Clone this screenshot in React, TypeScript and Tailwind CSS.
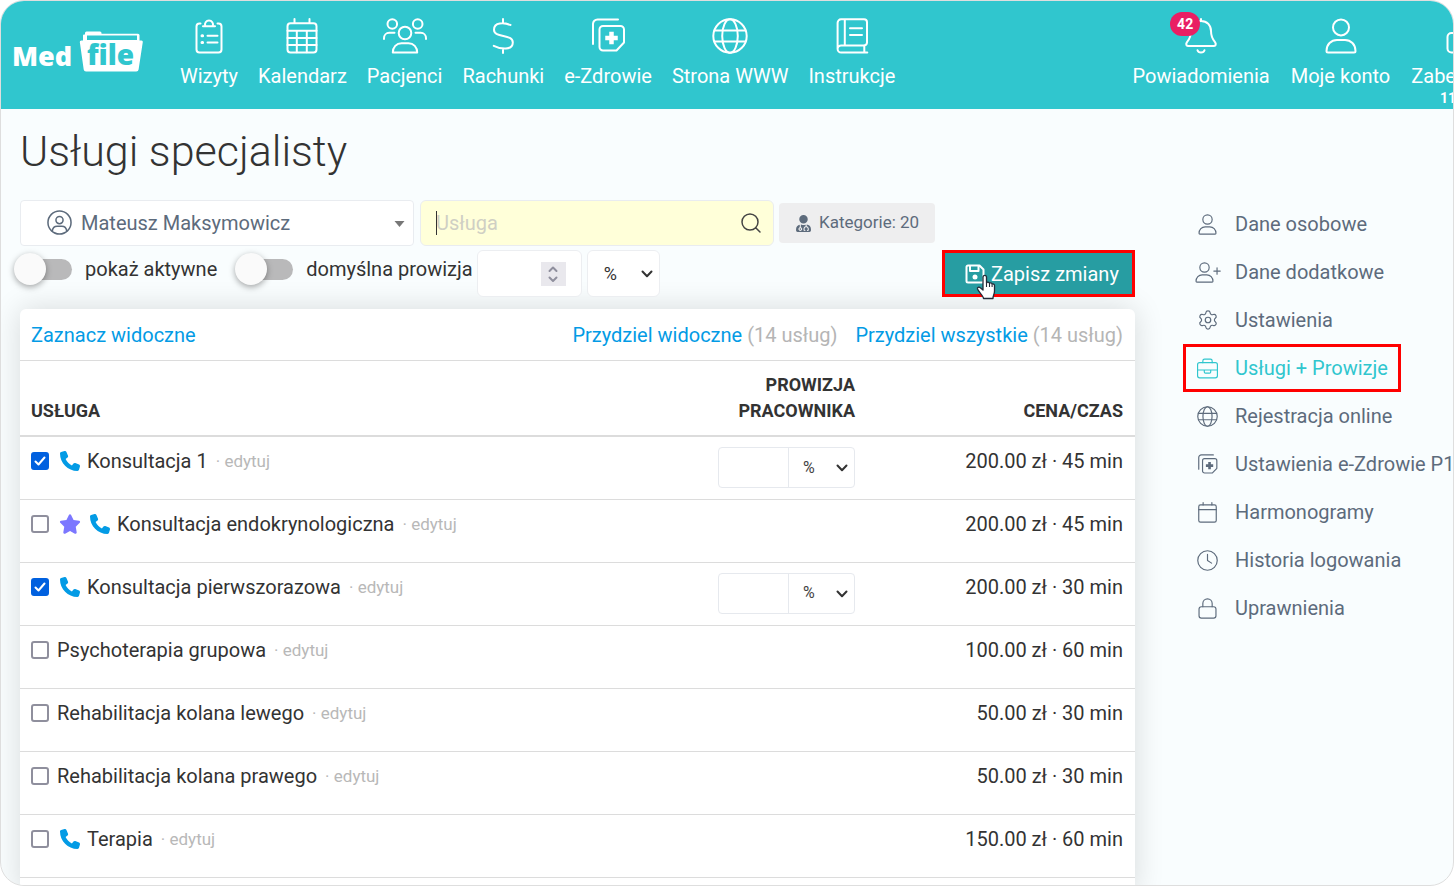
import React, { useState } from "react";
import { FaPhone, FaStar } from "react-icons/fa6";
import { FaUserMd } from "react-icons/fa";
import { Search, Settings } from "lucide-react";

const Icon = ({ children, className = "size-9", box = "0 0 36 36", stroke = 2 }: any) => (
  <svg
    viewBox={box}
    className={`shrink-0 ${className}`}
    fill="none"
    stroke="currentColor"
    strokeWidth={stroke}
    strokeLinecap="round"
    strokeLinejoin="round"
    aria-hidden="true"
  >
    {children}
  </svg>
);

const shapes: any = {
  clipboard: (
    <>
      <path d="M9.5 5.5h-1a3 3 0 0 0-3 3v23a3 3 0 0 0 3 3h19a3 3 0 0 0 3-3v-23a3 3 0 0 0-3-3h-1" />
      <path d="M12 8.3h12M14.3 8a4 4 0 1 1 7.4 0" />
      <path d="M16.5 17.7h10M16.5 24.5h10" />
      <path d="M11 17.7h.6M11 24.5h.6" strokeWidth="3" />
    </>
  ),
  calendar: (
    <>
      <rect x="3.5" y="5.2" width="29" height="29.3" rx="3" />
      <path d="M10.5 1v4M25.5 1v4M3.5 12.7h29M3.5 20h29M3.5 27h29M12.8 12.7v21.6M22.8 12.7v21.6" />
    </>
  ),
  users: (
    <>
      <circle cx="9.3" cy="6" r="4.8" />
      <circle cx="34.7" cy="6" r="4.8" />
      <circle cx="22" cy="15" r="6.3" />
      <path d="M9.8 34.5c0-5.3 3.6-9.3 8.7-9.3h7c5.1 0 8.7 4 8.7 9.3z" />
      <path d="M1 21v-.8c0-3 2.3-5.400 5.200-5.400H11.5M43 21v-.8c0-3-2.300-5.400-5.200-5.400H32.500" />
    </>
  ),
  dollar: (
    <path d="M18 1v4M18 31v4M25.500 7C19 4.500 9 4 9 11.700C9 20.500 27.800 15.500 27.800 24.500C27.800 32.500 16 31.500 8.800 27.800" />
  ),
  health: (
    <>
      <path d="M3 26V6a4.500 4.500 0 0 1 4.500-4.500H28" />
      <path d="M13 8h17.500a3.500 3.500 0 0 1 3.500 3.500V24.500L26.500 32.500H13A3.500 3.500 0 0 1 9.500 29V11.500A3.500 3.500 0 0 1 13 8z" />
      <path d="M21.500 16v8M17.500 20h8" strokeWidth="4.500" strokeLinecap="square" strokeLinejoin="miter" />
    </>
  ),
  globe: (
    <>
      <circle cx="18" cy="18" r="16.700" />
      <ellipse cx="18" cy="18" rx="7.800" ry="16.700" />
      <path d="M2.500 12.500h31M2.500 23.500h31" />
    </>
  ),
  book: (
    <path d="M7 1.300h23a3 3 0 0 1 3 3V24.500a3 3 0 0 1-2.700 2.900v7.200M33.300 34.600H7.200a3.600 3.600 0 0 1 0-7.200H30M3.600 31V4.800A3.500 3.500 0 0 1 7 1.300M10.800 1.500v25.700M16 10.200h12M16 17h12" />
  ),
  bell: (
    <>
      <path d="M18 1v2M18 3c-6.200 0-10 4.400-10 10c0 5.500-1.400 8-4 11.200c-1.500 2-.6 3.800 1 3.800h26c1.600 0 2.500-1.800 1-3.800c-2.600-3.200-4-5.700-4-11.200c0-5.600-3.800-10-10-10z" />
      <path d="M14.500 32.200c.9 3 6.100 3 7 0" />
    </>
  ),
  person: (
    <>
      <circle cx="18" cy="9.400" r="8" />
      <path d="M3.500 33c0-6.500 4.600-11 10.500-11h8c5.900 0 10.500 4.500 10.500 11a1.500 1.500 0 0 1-1.500 1.500H5A1.500 1.500 0 0 1 3.500 33z" />
    </>
  ),
  personPlus: (
    <>
      <circle cx="16" cy="9.400" r="8" />
      <path d="M1.500 33c0-6.500 4.600-11 10.500-11h8c5.900 0 10.500 4.500 10.500 11a1.500 1.500 0 0 1-1.500 1.500H3A1.500 1.500 0 0 1 1.500 33z" />
      <path d="M37.500 10v11M32 15.500h11" />
    </>
  ),
  lock: (
    <>
      <rect x="3.500" y="15" width="29" height="19.500" rx="4" />
      <path d="M10 15V9.500a8 8 0 0 1 16 0V15" />
    </>
  ),
  briefcase: (
    <>
      <rect x="1" y="8" width="34" height="26" rx="3.500" />
      <path d="M10 8V5a3 3 0 0 1 3-3h10a3 3 0 0 1 3 3v3M1 20.500h34M12.500 20.500v3.500a2 2 0 0 0 2 2h7a2 2 0 0 0 2-2v-3.500" />
    </>
  ),
  day: (
    <>
      <rect x="3" y="5" width="30" height="29.500" rx="3" />
      <path d="M10.500 1v4M25.500 1v4M3 13h30" />
    </>
  ),
  clock: (
    <>
      <circle cx="18" cy="18" r="16.700" />
      <path d="M18 7.500V18l7 4.500" />
    </>
  ),
};

const mainNav = [
  { label: "Wizyty", icon: "clipboard" },
  { label: "Kalendarz", icon: "calendar" },
  { label: "Pacjenci", icon: "users" },
  { label: "Rachunki", icon: "dollar" },
  { label: "e-Zdrowie", icon: "health" },
  { label: "Strona WWW", icon: "globe" },
  { label: "Instrukcje", icon: "book" },
];

const userNav = [
  { label: "Powiadomienia", icon: "bell", badge: "42" },
  { label: "Moje konto", icon: "person" },
  { label: "Zabezpiecz", icon: "lock", note: "119:59" },
];

const sideNav = [
  { label: "Dane osobowe", icon: "person" },
  { label: "Dane dodatkowe", icon: "personPlus" },
  { label: "Ustawienia", icon: "gear" },
  { label: "Usługi + Prowizje", icon: "briefcase", active: true },
  { label: "Rejestracja online", icon: "globe" },
  { label: "Ustawienia e-Zdrowie P1", icon: "health" },
  { label: "Harmonogramy", icon: "day" },
  { label: "Historia logowania", icon: "clock" },
  { label: "Uprawnienia", icon: "lock" },
];

const services = [
  { name: "Konsultacja 1", price: "200.00 zł · 45 min", phone: true, checked: true },
  { name: "Konsultacja endokrynologiczna", price: "200.00 zł · 45 min", phone: true, star: true },
  { name: "Konsultacja pierwszorazowa", price: "200.00 zł · 30 min", phone: true, checked: true },
  { name: "Psychoterapia grupowa", price: "100.00 zł · 60 min" },
  { name: "Rehabilitacja kolana lewego", price: "50.00 zł · 30 min" },
  { name: "Rehabilitacja kolana prawego", price: "50.00 zł · 30 min" },
  { name: "Terapia", price: "150.00 zł · 60 min", phone: true },
];

const Logo = () => (
  <svg viewBox="0 0 132 44" className="w-[132px] h-11" role="img" aria-label="MedFile">
    <path d="M71 13V6.500q0-1 1-1h1V4q0-1.500 1.500-1.500H88q1.500 0 1.500 1.500v.8H126q1.500 0 1.500 1.500V13" fill="#fff" />
    <path d="M75 6.500h50V11H75z" fill="#30c6ce" />
    <path d="M69.500 11.500h60q1.500 0 1.300 1.500l-4.200 27.500q-.3 2-2.300 2H74q-2 0-2.300-2L67.800 13q-.2-1.500 1.700-1.500z" fill="#fff" />
    <text x="0" y="37" fill="#fff" fontSize="27" className="font-['Open_Sans'] font-extrabold">Med</text>
    <text x="75" y="36" fill="#30c6ce" fontSize="28" className="font-['Open_Sans'] font-extrabold">file</text>
  </svg>
);

const NavItem = ({ item }: any) => (
  <li>
    <a href="#" className="flex flex-col items-center text-xl leading-6 whitespace-nowrap">
      <span className="relative mb-[10px]">
        <Icon
          box={item.icon === "users" ? "0 0 44 36" : "0 0 36 36"}
          className={item.icon === "users" ? "w-11 h-9" : "size-9"}
        >
          {shapes[item.icon]}
        </Icon>
        {item.badge && (
          <span className="absolute -left-[13px] -top-[6px] w-[30px] h-6 rounded-full bg-[#e91e63] text-sm leading-6 font-bold text-center">
            {item.badge}
          </span>
        )}
      </span>
      {item.label}
      {item.note && <span className="text-sm leading-5 font-bold">{item.note}</span>}
    </a>
  </li>
);

const Chevron = ({ className }: any) => (
  <Icon box="0 0 12 8" stroke={2} className={`w-3 h-2 pointer-events-none text-[#333] ${className}`}>
    <path d="M1.500 1.500L6 6.300L10.500 1.500" />
  </Icon>
);

const Toggle = ({ label }: any) => (
  <label className="flex items-center h-[38px] cursor-pointer whitespace-nowrap">
    <input type="checkbox" className="peer sr-only" />
    <span className="relative flex justify-end items-center w-[58px] h-8 mr-[13px] peer-checked:[&>i]:translate-x-6">
      <span className="w-11 h-[21px] rounded-full bg-[#b9b9ba]" />
      <i className="absolute left-0 top-0 size-8 rounded-full bg-[#fafafa] shadow-[0_2px_6px_rgba(0,0,0,0.35)] transition-transform" />
    </span>
    {label}
  </label>
);

const ServiceRow = ({ service }: any) => {
  const [checked, setChecked] = useState(!!service.checked);

  return (
    <tr className="h-[63px] border-b border-[#dcdcdc] align-top">
      <td className="pl-[11px] pt-[10px]">
        <div className="flex items-center h-7">
          <label className="flex items-center cursor-pointer">
            <span className="relative mr-2 flex">
              <input
                type="checkbox"
                checked={checked}
                onChange={() => setChecked(!checked)}
                className="appearance-none size-[18px] rounded-[3px] border-2 border-[#8f8f9d] bg-white checked:bg-[#0060df] checked:border-[#0060df]"
              />
              {checked && (
                <Icon box="0 0 18 18" className="absolute inset-0 size-[18px] text-white pointer-events-none">
                  <path d="M4.500 9.500L7.500 12.500L13.500 5.500" />
                </Icon>
              )}
            </span>
            {service.star && (
              <span className="w-[30px] pl-[2px]">
                <FaStar className="size-[22px] text-[#7c77ff]" />
              </span>
            )}
            {service.phone && (
              <span className="w-[30px] pl-[3px]">
                <FaPhone className="size-5 text-[#039be5]" />
              </span>
            )}
            {service.name}
          </label>
          <span className="ml-2 pt-0.5 text-[17px] text-[#b8b8b8]">
            · <a href="#">edytuj</a>
          </span>
        </div>
      </td>
      <td className="pr-3 pt-[10px]">
        {service.checked && (
          <div className="flex ml-auto w-[137px] h-[41px] rounded border border-[#e6e9ee]">
            <input aria-label={`Prowizja: ${service.name}`} className="w-[69px] px-2 outline-none" />
            <div className="relative flex-1 border-l border-[#e6e9ee]">
              <select
                aria-label={`Jednostka: ${service.name}`}
                className="appearance-none size-full pl-[14px] text-base text-[#444] outline-none"
              >
                <option>%</option>
                <option>zł</option>
              </select>
              <Chevron className="absolute right-[6px] top-4" />
            </div>
          </div>
        )}
      </td>
      <td className="pr-3 pt-[10px] text-right leading-7">{service.price}</td>
    </tr>
  );
};

const App = () => {
  return (
    <div className="h-screen overflow-hidden rounded-3xl border border-[#dedede] bg-[#f9fdfe] font-[Roboto,sans-serif] text-xl text-[#333]">
      <header className="flex h-[108px] bg-[#30c6ce] text-white">
        <a href="#" className="mt-7 ml-[11px] shrink-0">
          <Logo />
        </a>
        <ul className="flex gap-5 ml-9 pt-[17px]">
          {mainNav.map((item) => (
            <NavItem key={item.label} item={item} />
          ))}
        </ul>
        <ul className="flex gap-[21px] ml-auto -mr-15 pt-[17px]">
          {userNav.map((item) => (
            <NavItem key={item.label} item={item} />
          ))}
        </ul>
      </header>

      <div className="flex gap-12 pl-[19px]">
        <main className="flex-1 min-w-0">
          <h1 className="mt-[18px] mb-[25px] text-[43px] leading-12 font-light">Usługi specjalisty</h1>

          <div className="flex items-center text-[#5d6b7c]">
            <div className="relative w-[394px] h-[46px]">
              <select
                aria-label="Specjalista"
                className="appearance-none size-full pl-[60px] rounded border border-[#e9ecf0] bg-white outline-none"
              >
                <option>Mateusz Maksymowicz</option>
              </select>
              <Icon box="0 0 10 6" stroke={0} className="absolute right-[9px] top-[21px] w-[11px] h-[6px] text-[#777] pointer-events-none">
                <path d="M0 0h10L5 6z" fill="currentColor" />
              </Icon>
              <Icon box="0 0 26 26" stroke={1.600} className="absolute left-[27px] top-[10px] size-[25px] pointer-events-none">
                <circle cx="13" cy="13" r="12" />
                <circle cx="13" cy="10.500" r="3.700" />
                <path d="M5.500 22c.5-3.500 2.500-5 5-5h5c2.500 0 4.500 1.500 5 5" />
              </Icon>
            </div>
            <div className="relative w-[354px] h-[46px] ml-[6px]">
              <input
                type="text"
                aria-label="Usługa"
                placeholder="Usługa"
                className="size-full pl-[15px] pr-12 rounded-md border border-[#e9ecf0] bg-[#ffffd9] placeholder:text-[#cfcfc4] outline-none"
              />
              <span className="absolute left-4 top-[11px] w-px h-6 bg-[#333]" />
              <Search className="absolute right-[11px] top-[11px] size-6 text-[#444]" strokeWidth={1.500} />
            </div>
            <button className="flex items-center gap-[7px] h-10 ml-[5px] px-4 rounded bg-[#eeeeef] text-[17px]">
              <FaUserMd className="size-[17px]" />
              Kategorie: 20
            </button>
          </div>

          <div className="flex items-start mt-1">
            <div className="flex gap-[18px] -ml-[6px]">
              <Toggle label="pokaż aktywne" />
              <Toggle label="domyślna prowizja" />
            </div>
            <div className="relative w-[105px] h-[47px] ml-1">
              <input
                type="text"
                inputMode="numeric"
                aria-label="domyślna prowizja"
                className="size-full pl-4 pr-12 rounded-md border border-[#eceef1] bg-white outline-none"
              />
              <span className="absolute right-4 top-3 grid place-items-center w-[25px] h-6 bg-[#e9e8ed] text-[#8f8f9d]">
                <Icon box="0 0 10 18" stroke={2} className="w-[10px] h-[18px]">
                  <path d="M1.500 6L5 2.500L8.500 6M1.500 12.500L5 16L8.500 12.500" />
                </Icon>
              </span>
            </div>
            <div className="relative w-[73px] h-[47px] ml-[5px]">
              <select
                aria-label="Jednostka prowizji"
                className="appearance-none size-full pl-4 rounded-md border border-[#eceef1] bg-white outline-none text-lg"
              >
                <option>%</option>
                <option>zł</option>
              </select>
              <Chevron className="absolute right-[7px] top-5" />
            </div>
            <div className="relative ml-auto">
              <button className="flex items-center gap-[6px] h-[47px] w-[193px] pl-5 border-3 border-[#ff0000] bg-[#279da2] text-white">
                <Icon box="0 0 20 20" className="size-5" stroke={2}>
                  <path d="M3 1.500h11.500l4 4V17a1.500 1.500 0 0 1-1.500 1.500H3A1.500 1.500 0 0 1 1.500 17V3A1.500 1.500 0 0 1 3 1.500zM5 2v5h8.500V2" />
                  <circle cx="10" cy="13" r="2.500" fill="currentColor" stroke="none" />
                </Icon>
                Zapisz zmiany
              </button>
              <svg viewBox="0 0 20 26" className="absolute left-[34px] top-6 w-5 h-[26px]" aria-hidden="true">
                <path
                  d="M7 16V2.800a1.800 1.800 0 0 1 3.500 0V9c.3-1.200 2.800-1 3 .4c.5-1 2.500-.6 2.600.8c.8-.6 2.400-.2 2.400 1.400V17c0 3.500-1.500 4-1.500 7.500H7.500c0-2.500-4.500-6-6-9.500c-.5-1.500 1.400-2.600 2.800-1.200z"
                  fill="#fff"
                  stroke="#222b38"
                  strokeWidth="1.300"
                  strokeLinejoin="round"
                />
                <path d="M10.500 9v4M13.500 9.500v3.500M16.100 10.500V13" stroke="#222b38" strokeWidth="1.100" />
              </svg>
            </div>
          </div>

          <section className="mt-3 pb-4 rounded-md bg-white shadow-[0_0_30px_rgba(0,0,0,0.14)]">
            <div className="flex justify-between h-[52px] pt-3 pl-[11px] pr-3 leading-7 border-b border-[#dcdcdc] text-[#b5b5b5]">
              <a href="#" className="text-[#039be5]">Zaznacz widoczne</a>
              <div className="flex gap-[18px]">
                <span>
                  <a href="#" className="text-[#039be5]">Przydziel widoczne</a> (14 usług)
                </span>
                <span>
                  <a href="#" className="text-[#039be5]">Przydziel wszystkie</a> (14 usług)
                </span>
              </div>
            </div>
            <table className="w-full table-fixed">
              <thead>
                <tr className="h-[75px] border-b-2 border-[#dcdcdc] align-bottom text-lg leading-[26px] font-bold">
                  <th className="pl-[11px] pb-[11px] text-left">USŁUGA</th>
                  <th className="w-[160px] pr-3 pb-[11px] text-right">PROWIZJA PRACOWNIKA</th>
                  <th className="w-[268px] pr-3 pb-[11px] text-right">CENA/CZAS</th>
                </tr>
              </thead>
              <tbody>
                {services.map((service) => (
                  <ServiceRow key={service.name} service={service} />
                ))}
              </tbody>
            </table>
          </section>
        </main>

        <aside className="w-[270px] shrink-0 pt-[91px] text-[#5d6b7c]">
          <ul>
            {sideNav.map((item) => (
              <li key={item.label}>
                <a
                  href="#"
                  className={`flex items-center h-12 w-fit pl-[11px] pr-[10px] border-3 whitespace-nowrap ${
                    item.active ? "border-[#ff0000] text-[#30c6ce]" : "border-transparent"
                  }`}
                >
                  <span className="w-[38px]">
                    {item.icon === "gear" ? (
                      <Settings className="size-[22px]" strokeWidth={1.300} />
                    ) : (
                      <Icon
                        box={item.icon === "personPlus" ? "0 0 44 36" : "0 0 36 36"}
                        className={item.icon === "personPlus" ? "-ml-[2px] w-[26px] h-[21px]" : "size-[21px]"}
                      >
                        {shapes[item.icon]}
                      </Icon>
                    )}
                  </span>
                  {item.label}
                </a>
              </li>
            ))}
          </ul>
        </aside>
      </div>
    </div>
  );
};

export default App;
